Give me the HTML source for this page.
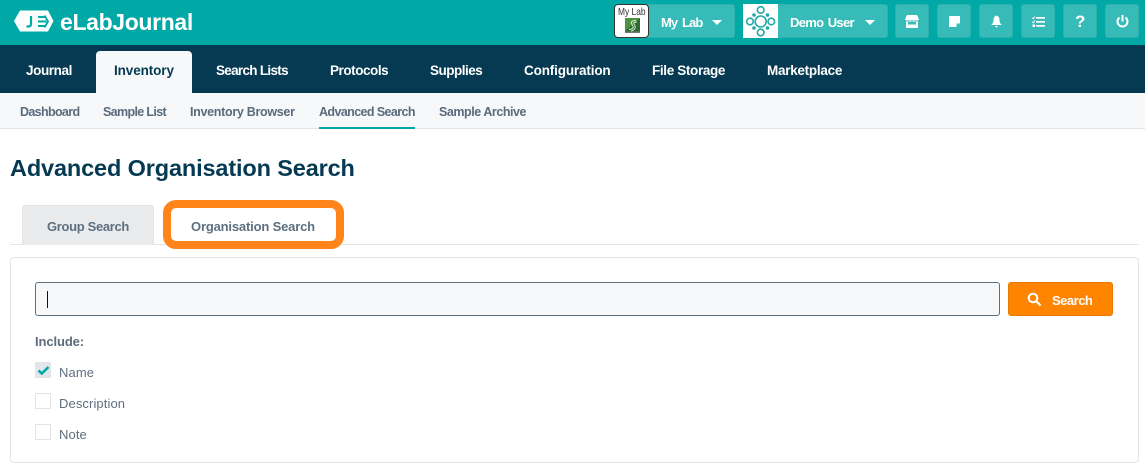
<!DOCTYPE html>
<html lang="en"><head><meta charset="utf-8"><title>Advanced Organisation Search</title>
<style>
html,body{margin:0;padding:0;width:1145px;height:471px;overflow:hidden;background:#fff;font-family:"Liberation Sans",sans-serif}
*{box-sizing:border-box}
.a{position:absolute}
.t{position:absolute;white-space:nowrap;font-weight:700}
.top{left:0;top:0;width:1145px;height:45px;background:#00a9a5}
.nav{left:0;top:45px;width:1145px;height:48px;background:#053a52}
.sub{left:0;top:93px;width:1145px;height:36px;background:#f6f8fa;border-bottom:1px solid #e2e5e8}
.btn{position:absolute;top:4px;height:34px;background:#36bbb8;border-radius:3px;border:1px solid #2fb1ae}
.n{top:63px;font-size:13.5px;line-height:16px;color:#fff}
.s{top:105px;font-size:12.5px;line-height:15px;color:#5a6b7c}
.c{position:absolute;left:35px;width:16px;height:16px;background:#fff;border:1px solid #e2e5e8}
.l{position:absolute;left:59px;font-size:13px;line-height:16px;color:#5f6f80;white-space:nowrap}
</style></head><body>
<div class="a top"></div>
<svg class="a" style="left:13px;top:9px" width="44" height="24" viewBox="0 0 44 24">
<path d="M1 12L7 1.500H35L40.500 12L35 22.500H7Z" fill="#fff"/>
<path d="M18 7V15Q18 17.500 15.500 17.500H13.500" fill="none" stroke="#00a9a5" stroke-width="2.200"/>
<path d="M25 8H31.500M25 12.500H33.500M25 17H31.500" fill="none" stroke="#00a9a5" stroke-width="2"/>
<path d="M31.500 6.500L35 12.500L31.500 18.500" fill="none" stroke="#00a9a5" stroke-width="1.800"/>
</svg>
<div class="t" style="left:60px;top:8px;font-size:23px;line-height:28px;color:#fff;letter-spacing:-.35px">eLabJournal</div>

<div class="btn" style="left:614px;width:121px"></div>
<div class="a" style="left:614px;top:4px;width:35px;height:34px;background:#fff;border:1px solid #333;border-radius:4px"></div>
<div class="a" style="left:618px;top:6px;font-size:10.500px;line-height:12px;color:#333;white-space:nowrap;transform:scaleX(.8);transform-origin:0 0">My Lab</div>
<svg class="a" style="left:625px;top:18px" width="15" height="15" viewBox="0 0 15 15"><rect width="15" height="15" fill="#2f6a34"/><path d="M0 0H15L0 13Z" fill="#4d9440"/><path d="M11 2.500C7 2.500 5 4 7 6.500S8.500 11 4 11.500M12 4C9 4 8 5 9.500 7S10 12 6 13" fill="none" stroke="#d5ebca" stroke-width="1"/><rect y="13.500" width="15" height="1.500" fill="#777"/></svg>
<div class="t" style="left:661px;top:15px;font-size:13px;line-height:16px;color:#fff;letter-spacing:-.9px;word-spacing:2px">My Lab</div>
<div class="a" style="left:712px;top:20px;border:5px solid transparent;border-top:5px solid #fff;border-bottom:0"></div>

<div class="btn" style="left:743px;width:145px"></div>
<svg class="a" style="left:743px;top:4px" width="35" height="34" viewBox="0 0 35 34"><rect width="35" height="34" fill="#fff"/><g fill="none" stroke="#1fa9a6" stroke-width="1.600"><circle cx="17.700" cy="17.500" r="5.500"/><circle cx="17.700" cy="6" r="3.300"/><circle cx="17.700" cy="28.500" r="3.300"/><circle cx="7" cy="17.500" r="3.300"/><circle cx="28.300" cy="17.500" r="3.300"/></g><g fill="#1fa9a6"><circle cx="11" cy="11" r="1.800"/><circle cx="24.500" cy="11" r="1.800"/><circle cx="11" cy="24" r="1.800"/><circle cx="24.500" cy="24" r="1.800"/></g></svg>
<div class="t" style="left:790px;top:15px;font-size:13px;line-height:16px;color:#fff;letter-spacing:-.7px;word-spacing:1.500px">Demo User</div>
<div class="a" style="left:865px;top:20px;border:5px solid transparent;border-top:5px solid #fff;border-bottom:0"></div>

<div class="btn" style="left:895px;width:34px"></div>
<div class="btn" style="left:937px;width:34px"></div>
<div class="btn" style="left:979px;width:34px"></div>
<div class="btn" style="left:1021px;width:34px"></div>
<div class="btn" style="left:1063px;width:34px"></div>
<div class="btn" style="left:1105px;width:34px"></div>

<svg class="a" style="left:905px;top:15px" width="14" height="13" viewBox="0 0 14 13"><path d="M2 0H12L14 4.500Q12.500 6.500 10.500 5Q9 6.500 7 5Q5 6.500 3.500 5Q1.500 6.500 0 4.500Z" fill="#fff"/><path d="M1 6.500H13V13H1Z" fill="#fff"/><rect x="3" y="7" width="8" height="2.500" fill="#36bbb8"/></svg>
<svg class="a" style="left:949px;top:16px" width="11" height="11" viewBox="0 0 11 11"><path d="M0 0H11V7L7 11H0Z" fill="#fff"/><path d="M7.500 7.500H10.500L7.500 10.500Z" fill="#36bbb8"/></svg>
<svg class="a" style="left:991px;top:15px" width="11" height="13" viewBox="0 0 11 13"><path d="M5.500 0.500Q8.500 1.500 8.500 5Q8.500 8 10.800 10H0.200Q2.500 8 2.500 5Q2.500 1.500 5.500 0.500Z" fill="#fff"/><path d="M4 11H7L5.500 12.800Z" fill="#fff"/></svg>
<svg class="a" style="left:1032px;top:16px" width="13" height="12" viewBox="0 0 13 12"><g fill="#fff"><rect x="4" y="1" width="9" height="1.700"/><rect x="4" y="5" width="9" height="1.700"/><rect x="4" y="9" width="9" height="1.700"/><rect x="0.500" y="8.500" width="2.500" height="2.500"/></g><path d="M0.300 1.700L1.300 2.700L3 .5M0.300 5.700L1.300 6.700L3 4.500" fill="none" stroke="#fff" stroke-width="1"/></svg>
<div class="t" style="left:1075px;top:12px;font-size:17px;line-height:20px;color:#fff">?</div>
<svg class="a" style="left:1116px;top:15px" width="13" height="13" viewBox="0 0 13 13"><path d="M3.500 2.500A5 5 0 1 0 9.500 2.500" fill="none" stroke="#fff" stroke-width="2"/><path d="M6.500 0V6.500" stroke="#fff" stroke-width="2"/></svg>

<div class="a nav"></div>
<div class="a" style="left:96px;top:51px;width:96px;height:42px;background:#f6f8fa;border-radius:4px 4px 0 0"></div>
<div class="t n" style="left:26px;letter-spacing:-.4px">Journal</div>
<div class="t n" style="left:114px;color:#053a52;letter-spacing:-.1px">Inventory</div>
<div class="t n" style="left:216px;letter-spacing:-.7px">Search Lists</div>
<div class="t n" style="left:330px;letter-spacing:-.45px">Protocols</div>
<div class="t n" style="left:430px;letter-spacing:-.5px">Supplies</div>
<div class="t n" style="left:524px;letter-spacing:-.15px">Configuration</div>
<div class="t n" style="left:652px;letter-spacing:-.35px">File Storage</div>
<div class="t n" style="left:767px;letter-spacing:-.27px">Marketplace</div>

<div class="a sub"></div>
<div class="t s" style="left:20px;letter-spacing:-.65px">Dashboard</div>
<div class="t s" style="left:103px;letter-spacing:-.65px">Sample List</div>
<div class="t s" style="left:190px;letter-spacing:-.3px">Inventory Browser</div>
<div class="t s" style="left:319px;letter-spacing:-.6px">Advanced Search</div>
<div class="a" style="left:319px;top:127px;width:96px;height:2px;background:#00a9a5"></div>
<div class="t s" style="left:439px;letter-spacing:-.45px">Sample Archive</div>

<div class="t" style="left:10px;top:154px;font-size:23.500px;line-height:28px;color:#053a52;letter-spacing:-.14px">Advanced Organisation Search</div>

<div class="a" style="left:10px;top:244px;width:1129px;height:1px;background:#e2e5e8"></div>
<div class="a" style="left:22px;top:205px;width:132px;height:40px;background:#e9ebed;border:1px solid #e2e5e8;border-bottom:0;border-radius:3px 3px 0 0"></div>
<div class="t" style="left:47px;top:219px;font-size:13px;line-height:16px;color:#5d7080;letter-spacing:-.33px">Group Search</div>
<div class="a" style="left:163px;top:200px;width:181px;height:49px;background:#fff;border:8px solid #ff8419;border-radius:13px"></div>
<div class="t" style="left:191px;top:219px;font-size:13px;line-height:16px;color:#5d7080;letter-spacing:-.17px">Organisation Search</div>

<div class="a" style="left:10px;top:257px;width:1129px;height:206px;background:#fff;border:1px solid #e2e5e8;border-radius:4px"></div>
<div class="a" style="left:35px;top:282px;width:965px;height:34px;background:#f6f8fa;border:1px solid #5a7080;border-radius:3px"></div>
<div class="a" style="left:47px;top:291px;width:1px;height:17px;background:#111"></div>
<div class="a" style="left:1008px;top:282px;width:105px;height:34px;background:#ff8400;border:1px solid #e87a02;border-radius:3px"></div>
<svg class="a" style="left:1027px;top:292px" width="15" height="15" viewBox="0 0 15 15"><circle cx="6" cy="6" r="4.300" fill="none" stroke="#fff" stroke-width="2"/><path d="M9.200 9.200L13.500 13.500" stroke="#fff" stroke-width="2.200"/></svg>
<div class="t" style="left:1052px;top:293px;font-size:13px;line-height:16px;color:#fff;letter-spacing:-.5px">Search</div>

<div class="t" style="left:35px;top:334px;font-size:13px;line-height:16px;color:#5d6b7a;letter-spacing:-.1px">Include:</div>
<div class="c" style="top:362px;background:#e2e6e8"></div>
<svg class="a" style="left:37px;top:365px" width="13" height="11" viewBox="0 0 13 11"><path d="M1.500 5.500L4.800 8.500L11.500 2" fill="none" stroke="#00a9a5" stroke-width="2.600"/></svg>
<div class="l" style="top:365px;letter-spacing:.1px">Name</div>
<div class="c" style="top:393px"></div>
<div class="l" style="top:396px;letter-spacing:.1px">Description</div>
<div class="c" style="top:424px"></div>
<div class="l" style="top:427px;letter-spacing:.1px">Note</div>
</body></html>
